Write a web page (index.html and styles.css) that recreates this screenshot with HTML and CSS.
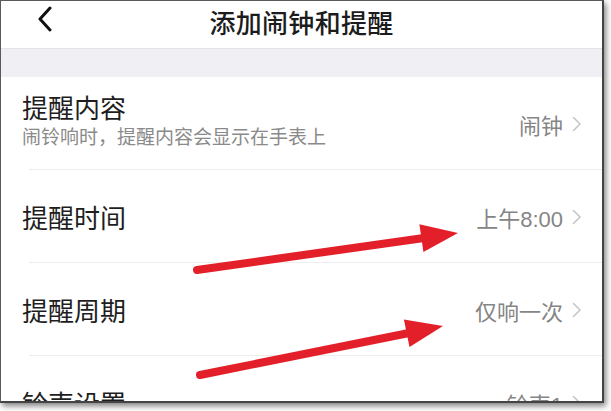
FILE: index.html
```html
<!DOCTYPE html>
<html lang="zh-CN">
<head>
<meta charset="utf-8">
<title>添加闹钟和提醒</title>
<link rel="stylesheet" href="styles.css">
</head>
<body>
<div class="frame">
  <header class="navbar">
    <span class="back">
      <svg width="16" height="26" viewBox="0 0 16 26"><path d="M13 2 L3 13 L13 24" fill="none" stroke="#111" stroke-width="3" stroke-linecap="round" stroke-linejoin="round"/></svg>
    </span>
    <h1 class="title">添加闹钟和提醒</h1>
  </header>
  <div class="band"></div>
  <ul class="list">
    <li class="row">
      <div class="label-wrap">
        <div class="label">提醒内容</div>
        <div class="sub">闹铃响时，提醒内容会显示在手表上</div>
      </div>
      <div class="value">闹钟</div>
      <span class="chev"><svg width="10" height="16" viewBox="0 0 10 16"><path d="M1.5 1.5 L8 8 L1.5 14.5" fill="none" stroke="#c6c6c8" stroke-width="1.6" stroke-linecap="round" stroke-linejoin="round"/></svg></span>
    </li>
    <li class="row">
      <div class="label-wrap"><div class="label">提醒时间</div></div>
      <div class="value">上午8:00</div>
      <span class="chev"><svg width="10" height="16" viewBox="0 0 10 16"><path d="M1.5 1.5 L8 8 L1.5 14.5" fill="none" stroke="#c6c6c8" stroke-width="1.6" stroke-linecap="round" stroke-linejoin="round"/></svg></span>
    </li>
    <li class="row">
      <div class="label-wrap"><div class="label">提醒周期</div></div>
      <div class="value">仅响一次</div>
      <span class="chev"><svg width="10" height="16" viewBox="0 0 10 16"><path d="M1.5 1.5 L8 8 L1.5 14.5" fill="none" stroke="#c6c6c8" stroke-width="1.6" stroke-linecap="round" stroke-linejoin="round"/></svg></span>
    </li>
    <li class="row">
      <div class="label-wrap"><div class="label">铃声设置</div></div>
      <div class="value">铃声1</div>
      <span class="chev"><svg width="10" height="16" viewBox="0 0 10 16"><path d="M1.5 1.5 L8 8 L1.5 14.5" fill="none" stroke="#c6c6c8" stroke-width="1.6" stroke-linecap="round" stroke-linejoin="round"/></svg></span>
    </li>
  </ul>
</div>
<svg class="arrows" width="611" height="411" viewBox="0 0 611 411">
  <line x1="197" y1="270" x2="424" y2="238" stroke="#e3202a" stroke-width="8" stroke-linecap="round"/>
  <polygon points="458,233 423.4,252.1 419.4,224.3" fill="#e3202a"/>
  <line x1="200" y1="375" x2="409" y2="333" stroke="#e3202a" stroke-width="8" stroke-linecap="round"/>
  <polygon points="443,326 409.5,347 403.9,319.6" fill="#e3202a"/>
</svg>
</body>
</html>
```

FILE: styles.css
```css
html, body {
  margin: 0;
  padding: 0;
  background: #ffffff;
}
body {
  width: 611px;
  height: 411px;
  position: relative;
  overflow: hidden;
  font-family: "Noto Sans CJK SC", "Noto Sans", "Liberation Sans", sans-serif;
}
.frame {
  box-sizing: border-box;
  width: 604px;
  height: 403px;
  border: 1px solid #5a5a5a;
  border-right: 2px solid #444;
  border-bottom: 2px solid #444;
  box-shadow: 2px 3px 6px rgba(0, 0, 0, 0.5);
  background: #fff;
  overflow: hidden;
}
.navbar {
  height: 47px;
  display: flex;
  align-items: center;
  justify-content: center;
  position: relative;
  background: #fff;
}
.back {
  position: absolute;
  left: 36px;
  top: 5px;
  display: flex;
}
.title {
  margin: 0 0 6px 0;
  font-size: 26px;
  font-weight: 500;
  color: #1c1c1c;
  letter-spacing: 0.3px;
}
.band {
  height: 28px;
  background: #efeff4;
  border-top: 1px solid #e3e3e8;
}
.list {
  list-style: none;
  margin: 0;
  padding: 0;
}
.row {
  height: 93px;
  box-sizing: border-box;
  display: flex;
  align-items: center;
  padding-left: 21px;
  padding-right: 20px;
  background: linear-gradient(#ededed, #ededed) no-repeat left 28px bottom / calc(100% - 28px) 1px;
}
.label-wrap {
  flex: 1;
  display: flex;
  flex-direction: column;
}
.label {
  font-size: 26px;
  line-height: 30px;
  color: #1e1e1e;
}
.sub {
  font-size: 19px;
  line-height: 24px;
  color: #8a8a8a;
  margin-top: 2px;
}
.row:first-child .label-wrap {
  margin-top: -8px;
}
.value {
  font-family: "Liberation Sans", "Noto Sans CJK SC", sans-serif;
  font-size: 22px;
  color: #858585;
  margin-right: 9px;
}
.chev {
  display: flex;
}
.arrows {
  position: absolute;
  top: 0;
  left: 0;
  pointer-events: none;
}
```
